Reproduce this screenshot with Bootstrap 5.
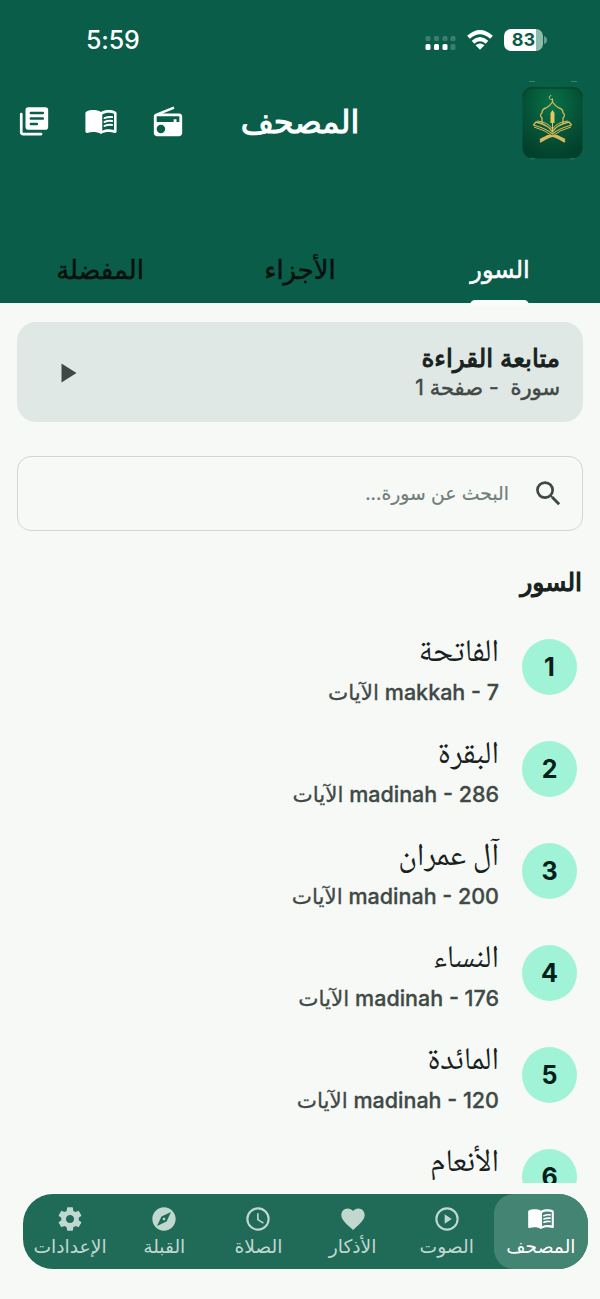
<!DOCTYPE html>
<html lang="ar" dir="rtl">
<head>
<meta charset="utf-8">
<meta name="viewport" content="width=device-width, initial-scale=1">
<title>المصحف</title>
<link href="https://cdn.jsdelivr.net/npm/bootstrap@5.3.0/dist/css/bootstrap.min.css" rel="stylesheet">
<style>
  body { background:#f6f9f6; color:#18211d; font-family:Inter,"DejaVu Sans",sans-serif; height:1299px; overflow:hidden; }
  svg { display:block; flex:none; }
  .top-area { background:#0a5d49; height:303px; color:#fff; }
  .status-bar { height:80px; padding:0 53px 0 86px; }
  .clock-time { font:500 25px/28px Inter,sans-serif; letter-spacing:-.2px; }
  .battery { width:39px; height:22px; border-radius:7px; background:linear-gradient(90deg,#fff 83%,#8dbcab 83%); color:#0a5d49; font:700 18px/22px Inter,sans-serif; }
  .title-row { height:84px; padding:0 17px 0 17px; }
  .side { width:168px; }
  .page-title { font-size:32px; line-height:40px; -webkit-text-stroke:1px currentColor; }
  .logo-tile { margin-top:-4px; }
  .tab-row { height:65px; margin-top:74px; }
  .tab-link { color:#06100d; font-size:25.8px; line-height:30px; padding-top:17px; -webkit-text-stroke:.5px currentColor; }
  .tab-link.active { color:#fff; font-size:24px; }
  .tab-mark { width:59px; height:6px; bottom:-3px; left:50%; margin-left:-30px; border-radius:5px 5px 0 0; background:#fafcfa; }
  .resume { height:100px; margin:19px 17px 0; border-radius:19px; background:#dfe8e4; padding:2px 23px 0 43px; }
  .resume-name { font-size:24.6px; line-height:30px; -webkit-text-stroke:1px currentColor; }
  .resume-sub { font-size:21px; line-height:30px; color:#414946; white-space:pre; -webkit-text-stroke:.5px currentColor; }
  .search-box { height:75px; margin:34px 17px 0; border:1.5px solid #d0d7d3; border-radius:14px; padding:0 17px; color:#737e79; font-size:18.8px; }
  .search-hint { margin-right:23px; margin-top:2px; -webkit-text-stroke:.2px currentColor; }
  .section-name { font-size:25px; font-weight:400; line-height:34px; margin:34px 18px 0; -webkit-text-stroke:1.2px currentColor; }
  .sura-list { height:554px; margin-top:30px; padding-top:10px; overflow:hidden; }
  .sura { height:102px; padding:0 23px; }
  .num { width:55px; height:56px; padding-top:1px; background:#a1f3d7; color:#062019; font-weight:700; font-size:25px; }
  .sura-text { margin-right:23px; margin-top:-8px; }
  .sura-name { font-family:"Noto Naskh Arabic","DejaVu Sans",serif; font-size:31.5px; line-height:46px; }
  .sura-info { font-size:21.5px; font-weight:500; line-height:30px; color:#414946; -webkit-text-stroke:.3px currentColor; }
  .dock { height:75px; margin:11px 12px 0 23px; border-radius:30px; background:#206a58; overflow:hidden; }
  .dock-item { color:#c0d8d0; font-size:18.7px; line-height:24px; padding-top:11px; white-space:nowrap; }
  .dock-item.active { background:#438572; color:#fff; border-radius:20px 0 0 20px; }
  .dock-item svg { margin-bottom:2px; }
</style>
</head>
<body>
<svg width="0" height="0" class="position-absolute">
  <symbol id="book" viewBox="0 0 24 24">
    <path fill="currentColor" fill-rule="evenodd" d="M12 4.900C10.400 4 8.500 3.600 6.500 3.600 4.900 3.600 3.200 3.900 1.900 4.500 1.300 4.700 1 5.200 1 5.800V18.600C1 19.400 1.600 19.900 2.400 19.700 3.700 19.300 5 19.100 6.500 19.100 8.500 19.100 10.400 19.500 12 20.500 13.600 19.500 15.500 19.100 17.500 19.100 19 19.100 20.300 19.300 21.600 19.700 22.400 19.900 23 19.400 23 18.600V5.800C23 5.200 22.700 4.700 22.100 4.500 20.800 3.900 19.100 3.600 17.500 3.600 15.500 3.600 13.600 4 12 4.900ZM12.900 6.700C14.300 5.900 15.900 5.500 17.500 5.500 18.800 5.500 20 5.700 21.200 6.100V17.600C20 17.300 18.700 17.200 17.500 17.200 15.900 17.200 14.300 17.500 12.900 18.200Z"/>
    <path fill="none" stroke="currentColor" stroke-width="1.400" stroke-linecap="round" d="M14.500 9.200Q17 8.100 19.800 8.500M14.500 12Q17 10.900 19.800 11.300M14.500 14.800Q17 13.700 19.800 14.100"/>
  </symbol>
</svg>

<header class="top-area">
  <div class="status-bar d-flex align-items-center justify-content-between" dir="ltr">
    <div class="clock-time">5:59</div>
    <div class="d-flex align-items-center">
      <svg width="31" height="16" viewBox="0 0 31 16" style="margin-top:6px"><g fill="#3b7e6d"><rect x=".5" y="1" width="5" height="5" rx="1.500"/><rect x="9" y="1" width="5" height="5" rx="1.500"/><rect x="17.500" y="1" width="5" height="5" rx="1.500"/><rect x="25.500" y="1" width="5" height="5" rx="1.500"/><rect x="25.500" y="9" width="5" height="6" rx="1.500"/></g><g fill="#fff"><rect x=".5" y="9" width="5" height="6" rx="1.500"/><rect x="9" y="9" width="5" height="6" rx="1.500"/><rect x="17.500" y="9" width="5" height="6" rx="1.500"/></g></svg>
      <svg class="ms-2 me-2" width="32" height="22" viewBox="0 0 32 22"><g fill="none" stroke="#fff" stroke-width="4"><path d="M4.500 8.300Q16-2.200 27.500 8.300"/><path d="M9 13.200Q16 7.200 23 13.200"/></g><path fill="#fff" d="M11.500 16.200Q16 12.600 20.500 16.200L16 20.800Z"/></svg>
      <div class="battery text-center">83</div>
      <svg width="4" height="8" viewBox="0 0 4 8"><path fill="#65a18e" d="M1 0Q4 1 4 4T1 8Z"/></svg>
    </div>
  </div>
  <div class="title-row d-flex align-items-center justify-content-between">
    <div class="side">
      <svg class="logo-tile" width="61" height="80" viewBox="0 0 61 80">
        <defs><radialGradient id="tile" cx=".5" cy=".25" r=".75"><stop offset="0" stop-color="#087249"/><stop offset=".6" stop-color="#055237"/><stop offset="1" stop-color="#03402b"/></radialGradient></defs>
        <path d="M7 1.500h6M49 1.500h6" stroke="#2f8a69" stroke-width="1"/>
        <path d="M3 9Q9 3 18 3H43Q52 3 58 9" fill="#076243"/>
        <rect x=".5" y="6.500" width="60" height="72" rx="10" fill="url(#tile)"/>
        <path d="M1 17Q2 8 11 8H50Q59 8 60 17" fill="none" stroke="#044a32" stroke-width="2"/>
        <path d="M8 78.800h5M48 78.800h5" fill="none" stroke="#277f5d"/>
        <g fill="none" stroke="#d9b957" stroke-width="1.300" stroke-linejoin="round">
          <path d="M20 44V38Q17 35 20 33Q20 29 24 28Q28 26 30.500 22Q33 26 37 28Q41 29 41 33Q44 35 41 38V44M30.500 22V19"/>
          <path d="M31 18.500A2 2 0 1 1 29.300 15.500" stroke-width="1"/>
          <path d="M30.500 52Q27 45 14 42L11.500 45Q25 49 30.500 54Q36 49 49.500 45L47 42Q34 45 30.500 52Z"/>
          <path d="M15 41Q26 42 30.500 49Q35 42 46 41" stroke-width="1"/>
          <path d="M12 47Q23 50 30.500 56Q38 50 49 47" stroke-width="1"/>
          <path d="M18 60L26 56Q30 54 43 62M43 60L35 56Q31 54 18 62" stroke-width="2"/>
        </g>
        <path d="M28.500 43V33L30.500 30L32.500 33V43Z" fill="#e7c75d"/><path d="M30.500 41V51" stroke="#e7c75d"/>
      </svg>
    </div>
    <div class="page-title">المصحف</div>
    <div class="side d-flex justify-content-between" dir="ltr">
      <svg width="34" height="34" viewBox="0 0 24 24"><path fill="#fff" fill-rule="evenodd" d="M8 1.500H20Q22 1.500 22 3.500V15.500Q22 17.500 20 17.500H8Q6 17.500 6 15.500V3.500Q6 1.500 8 1.500ZM9.800 4.700a.9.9 0 0 0 0 1.800H18.200a.9.9 0 0 0 0-1.800ZM9.800 8.600a.9.9 0 0 0 0 1.800H18.200a.9.9 0 0 0 0-1.800ZM9.800 12.500a.9.9 0 0 0 0 1.800H14a.9.9 0 0 0 0-1.800Z"/><path fill="none" stroke="#fff" stroke-width="1.900" stroke-linecap="round" d="M3 6.500V19Q3 20.500 4.500 20.500H17"/></svg>
      <svg width="34" height="34"><use href="#book"/></svg>
      <svg width="34" height="34" viewBox="0 0 24 24"><path fill="#fff" d="M3.240 6.150C2.510 6.430 2 7.170 2 8v12c0 1.100.89 2 2 2h16c1.110 0 2-.9 2-2V8c0-1.110-.89-2-2-2H8.300l8.260-3.340L15.880 1 3.240 6.150zM7 20c-1.660 0-3-1.340-3-3s1.340-3 3-3 3 1.340 3 3-1.340 3-3 3zm13-8h-2v-2h-2v2H4V8h16v4z"/></svg>
    </div>
  </div>
  <nav class="tab-row row g-0 text-center">
    <div class="col tab-link active position-relative"><span>السور</span><i class="tab-mark position-absolute"></i></div>
    <div class="col tab-link"><span>الأجزاء</span></div>
    <div class="col tab-link"><span>المفضلة</span></div>
  </nav>
</header>

<main>
  <section class="resume d-flex align-items-center justify-content-between">
    <div>
      <div class="resume-name">متابعة القراءة</div>
      <div class="resume-sub">سورة  - صفحة 1</div>
    </div>
    <svg width="17" height="20" viewBox="0 0 17 20"><path fill="#404845" d="M1.500.5L16.500 10L1.500 19.500Z"/></svg>
  </section>
  <div class="search-box d-flex align-items-center">
    <svg width="33" height="33" viewBox="0 0 24 24"><path fill="#404845" d="M15.500 14h-.79l-.28-.27A6.471 6.471 0 0 0 16 9.500 6.500 6.500 0 1 0 9.500 16c1.610 0 3.090-.59 4.230-1.570l.27.28v.79l5 4.990L20.490 19l-4.990-5zm-6 0C7.010 14 5 11.990 5 9.500S7.010 5 9.500 5 14 7.010 14 9.500 11.990 14 9.500 14z"/></svg>
    <span class="search-hint">البحث عن سورة...</span>
  </div>
  <h2 class="section-name">السور</h2>
  <div class="sura-list">
    <div class="sura d-flex"><div class="num rounded-circle d-flex align-items-center justify-content-center">1</div><div class="sura-text"><div class="sura-name">الفاتحة</div><div class="sura-info">makkah - 7 الآيات</div></div></div>
    <div class="sura d-flex"><div class="num rounded-circle d-flex align-items-center justify-content-center">2</div><div class="sura-text"><div class="sura-name">البقرة</div><div class="sura-info">madinah - 286 الآيات</div></div></div>
    <div class="sura d-flex"><div class="num rounded-circle d-flex align-items-center justify-content-center">3</div><div class="sura-text"><div class="sura-name">آل عمران</div><div class="sura-info">madinah - 200 الآيات</div></div></div>
    <div class="sura d-flex"><div class="num rounded-circle d-flex align-items-center justify-content-center">4</div><div class="sura-text"><div class="sura-name">النساء</div><div class="sura-info">madinah - 176 الآيات</div></div></div>
    <div class="sura d-flex"><div class="num rounded-circle d-flex align-items-center justify-content-center">5</div><div class="sura-text"><div class="sura-name">المائدة</div><div class="sura-info">madinah - 120 الآيات</div></div></div>
    <div class="sura d-flex"><div class="num rounded-circle d-flex align-items-center justify-content-center">6</div><div class="sura-text"><div class="sura-name">الأنعام</div></div></div>
  </div>
</main>

<nav class="dock row g-0 text-center">
  <div class="col dock-item active"><svg class="mx-auto" width="28" height="28"><use href="#book"/></svg>المصحف</div>
  <div class="col dock-item"><svg class="mx-auto" width="28" height="28" viewBox="0 0 24 24" fill="currentColor"><path d="M12 2a10 10 0 1 0 0 20 10 10 0 0 0 0-20zm0 18.200a8.200 8.200 0 1 1 0-16.400 8.200 8.200 0 0 1 0 16.400zM10 16l6-4-6-4z"/></svg>الصوت</div>
  <div class="col dock-item"><svg class="mx-auto" width="28" height="28" viewBox="0 0 24 24" fill="currentColor"><path d="M12 21.350l-1.450-1.320C5.400 15.360 2 12.280 2 8.500 2 5.420 4.420 3 7.500 3c1.740 0 3.410.81 4.500 2.090C13.090 3.810 14.760 3 16.500 3 19.580 3 22 5.420 22 8.500c0 3.780-3.400 6.860-8.550 11.540L12 21.350z"/></svg>الأذكار</div>
  <div class="col dock-item"><svg class="mx-auto" width="28" height="28" viewBox="0 0 24 24" fill="currentColor"><path d="M12 2a10 10 0 1 0 0 20 10 10 0 0 0 0-20zm0 18.200a8.200 8.200 0 1 1 0-16.400 8.200 8.200 0 0 1 0 16.400zM11.200 7h1.400v5.200l4.400 2.700-.7 1.200-5.100-3.200z"/></svg>الصلاة</div>
  <div class="col dock-item"><svg class="mx-auto" width="28" height="28" viewBox="0 0 24 24" fill="currentColor"><path d="M12 10.900c-.61 0-1.100.49-1.100 1.100s.49 1.100 1.100 1.100c.61 0 1.100-.49 1.100-1.100s-.49-1.100-1.100-1.100zM12 2C6.480 2 2 6.480 2 12s4.480 10 10 10 10-4.480 10-10S17.520 2 12 2zm2.190 12.190L6 18l3.810-8.190L18 6l-3.810 8.190z"/></svg>القبلة</div>
  <div class="col dock-item"><svg class="mx-auto" width="28" height="28" viewBox="0 0 24 24" fill="currentColor"><path d="M19.430 12.980c.04-.32.07-.64.07-.98s-.03-.66-.07-.98l2.110-1.650c.19-.15.24-.42.12-.64l-2-3.460c-.12-.22-.39-.3-.61-.22l-2.490 1c-.52-.4-1.080-.73-1.690-.98l-.38-2.650C14.460 2.180 14.250 2 14 2h-4c-.25 0-.46.18-.49.42l-.38 2.650c-.61.25-1.170.59-1.690.98l-2.490-1c-.23-.09-.49 0-.61.22l-2 3.460c-.13.22-.07.49.12.64l2.110 1.650c-.04.32-.07.65-.07.98s.03.66.07.98l-2.110 1.650c-.19.15-.24.42-.12.64l2 3.460c.12.22.39.3.61.22l2.490-1c.52.4 1.080.73 1.690.98l.38 2.650c.03.24.24.42.49.42h4c.25 0 .46-.18.49-.42l.38-2.650c.61-.25 1.170-.59 1.690-.98l2.490 1c.23.09.49 0 .61-.22l2-3.460c.12-.22.07-.49-.12-.64l-2.110-1.650zM12 15.500c-1.930 0-3.500-1.570-3.500-3.500s1.570-3.500 3.500-3.500 3.500 1.570 3.500 3.500-1.570 3.500-3.500 3.500z"/></svg>الإعدادات</div>
</nav>
<script src="https://cdn.jsdelivr.net/npm/bootstrap@5.3.0/dist/js/bootstrap.bundle.min.js"></script>
</body>
</html>
